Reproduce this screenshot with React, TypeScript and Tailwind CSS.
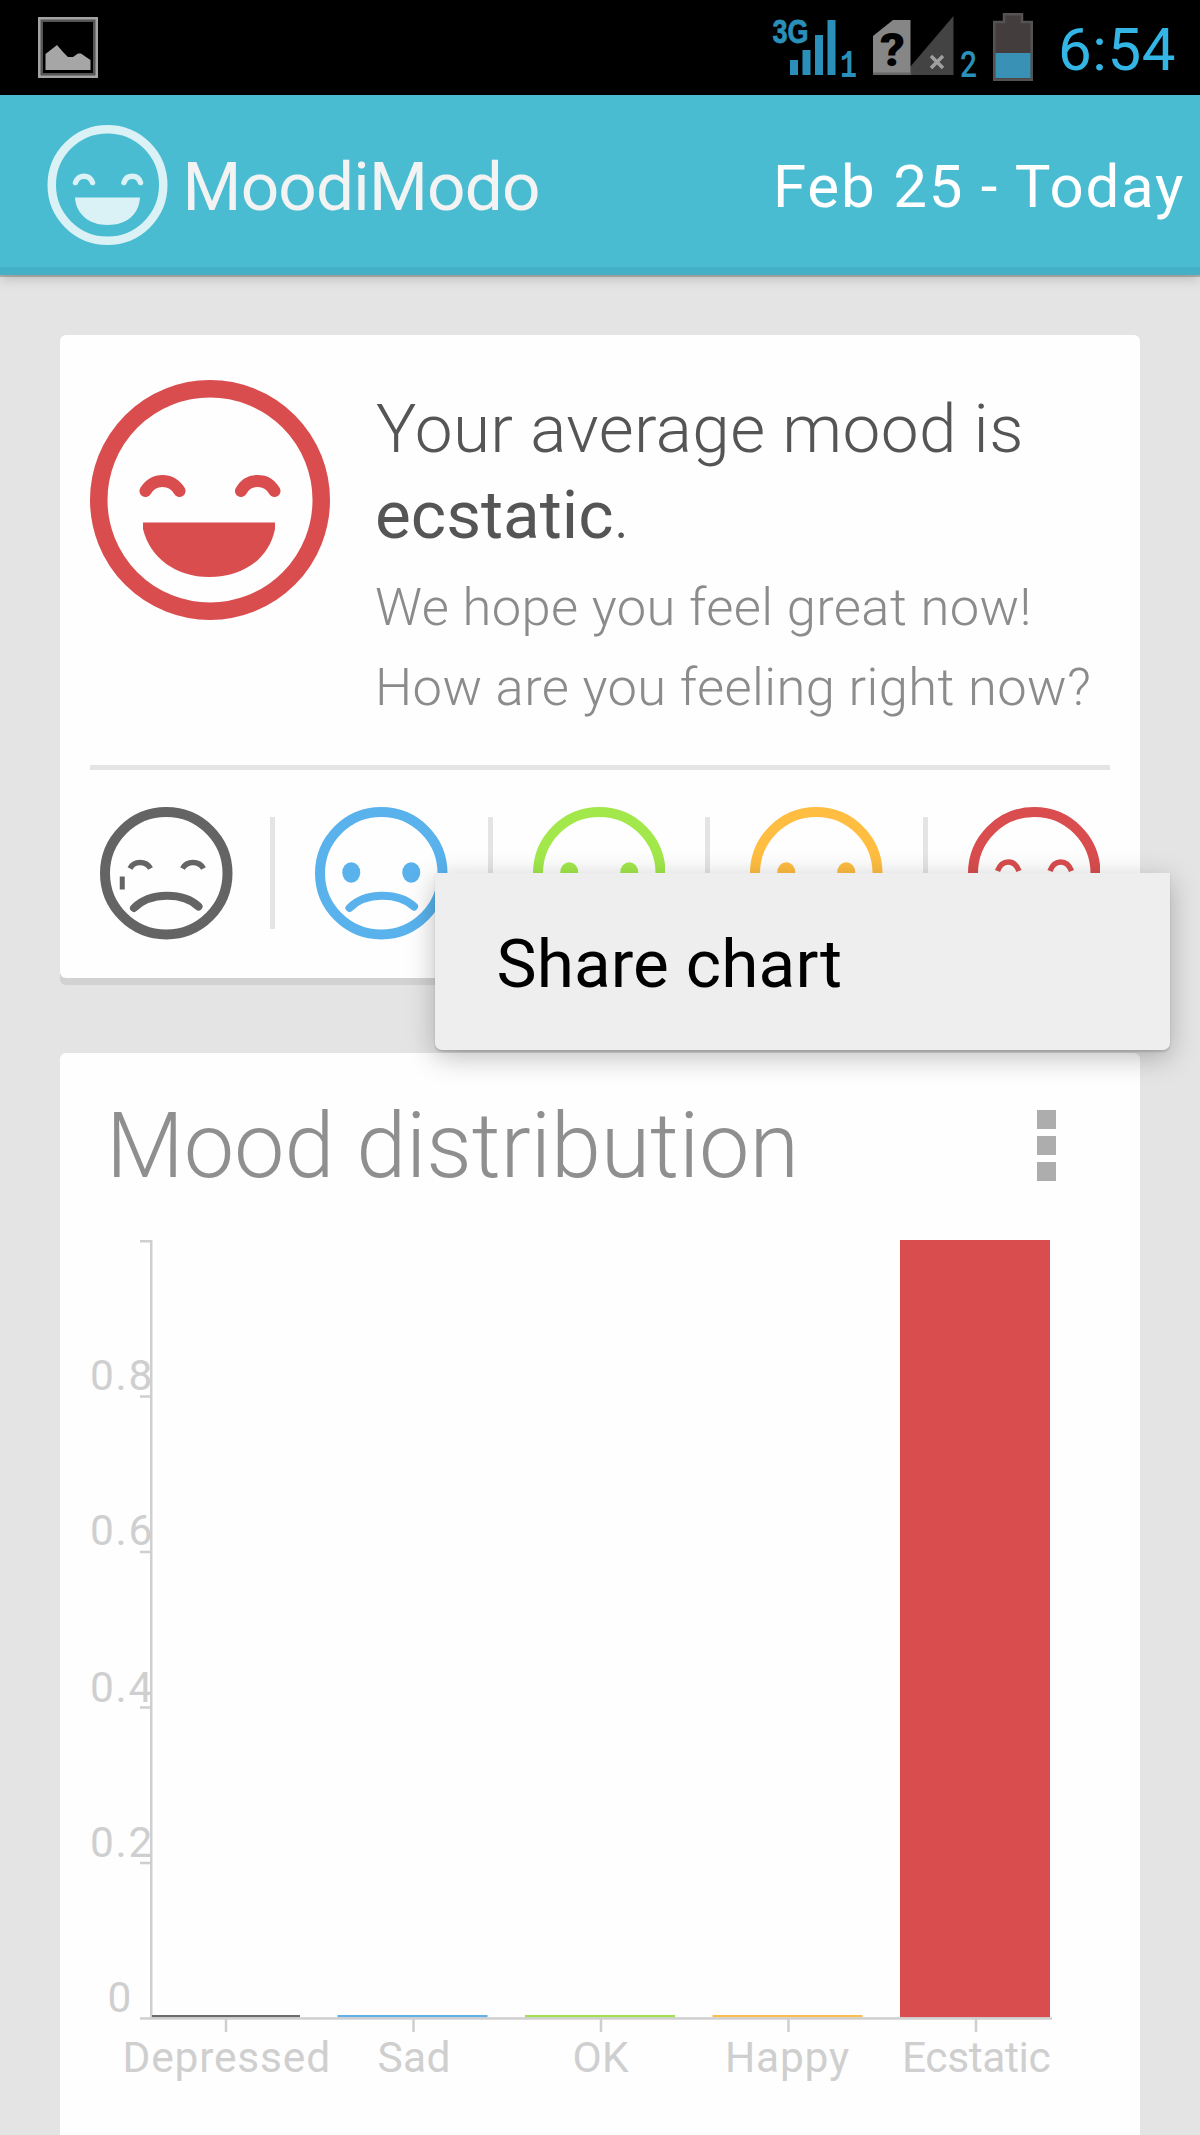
import type { ReactNode } from 'react';

function PictureIcon() {
  return (
    <svg width="60" height="61" viewBox="0 0 60 61">
      <rect x="3.5" y="3.5" width="53" height="54" fill="none" stroke="#555" strokeWidth="3" />
      <rect x="1.25" y="1.25" width="57.5" height="58.5" fill="none" stroke="#a3a3a3" strokeWidth="2.5" />
      <path d="M7.5 53V37L12 33.5L19 28L25 35L30 40H35L40 36.5H43L48 40L52.5 43V53Z" fill="#a6a6a6" />
    </svg>
  );
}

function SignalIcon() {
  return (
    <svg width="92" height="74" viewBox="-4 0 92 74" fill="#2a8fb9">
      <text x="0.500" y="29.500" fontFamily="Liberation Sans" fontWeight="700" fontSize="34" textLength="36" lengthAdjust="spacingAndGlyphs" stroke="#2a8fb9" strokeWidth="0.800">3G</text>
      <rect x="18" y="47" width="8" height="15" />
      <rect x="30.500" y="37" width="8" height="25" />
      <rect x="43" y="22" width="8" height="40" />
      <rect x="55.500" y="7" width="8" height="55" />
      <text x="68" y="64" fontFamily="Liberation Mono" fontWeight="700" fontSize="38" textLength="17" lengthAdjust="spacingAndGlyphs">1</text>
    </svg>
  );
}

function SimIcon() {
  return (
    <svg width="110" height="74" viewBox="0 0 110 74">
      <path d="M80.500 3V62H37V54Z" fill="#434343" />
      <path d="M0 23L20 7H37.500V62H0Z" fill="#868686" />
      <path d="M0 59.500H38V62H0Z" fill="#666" />
      <path d="M58 43L70 55M70 43L58 55" stroke="#a0a0a0" strokeWidth="3.500" />
      <text x="7" y="53" fontFamily="Roboto" fontWeight="900" fontSize="46" textLength="25" lengthAdjust="spacingAndGlyphs" fill="#000">?</text>
      <text x="87" y="64" fontFamily="Roboto" fontWeight="500" fontSize="37" textLength="17" lengthAdjust="spacingAndGlyphs" fill="#2a8fb9">2</text>
    </svg>
  );
}

function BatteryIcon() {
  return (
    <svg width="40" height="68" viewBox="0 0 40 68">
      <path d="M1.250 9H11V1.250H29V9H38.750V66.750H1.250Z" fill="#433d3d" stroke="#545252" strokeWidth="2.500" />
      <rect x="2.500" y="40" width="35" height="25" fill="#3992b5" />
    </svg>
  );
}

function LaughingFace() {
  return (
    <svg className="shrink-0" width="240" height="240" viewBox="0 0 240 240" fill="none" stroke="#d94d4f">
      <circle cx="120" cy="120" r="111.250" strokeWidth="17.500" />
      <path d="M55.500 111C63 97.500 82 97.500 89.500 111M151 111C158.500 97.500 177 97.500 184.500 111" strokeWidth="12" strokeLinecap="round" />
      <path d="M53 142.500H185V149C179 179 153 197 119 197C86 197 60 178 53 149Z" fill="#d94d4f" stroke="none" />
    </svg>
  );
}

function LogoFace() {
  return (
    <svg width="121" height="120" viewBox="0 0 121 120" fill="none" stroke="#daf1f5">
      <circle cx="60.500" cy="60" r="55.750" strokeWidth="8.500" />
      <path d="M28.500 57.500C31 49 43 49 45.500 57.500M77 57.500C79.500 49 91 49 93.500 57.500" strokeWidth="5.500" strokeLinecap="round" />
      <path d="M28 72.500H93C92 89 80 100 60.500 100C42 100 29 89 28 72.500Z" fill="#daf1f5" stroke="none" />
    </svg>
  );
}

function MoodFace({ color, children }: { color: string; children: ReactNode }) {
  return (
    <svg className="shrink-0" width="132.500" height="132.500" viewBox="0 0 132.500 132.500" fill="none" stroke={color}>
      <circle cx="66.250" cy="66.250" r="61.250" strokeWidth="10" />
      {children}
    </svg>
  );
}

function RoundEyes({ color }: { color: string }) {
  return (
    <g fill={color} stroke="none">
      <ellipse cx="36.250" cy="65.500" rx="9" ry="10.200" />
      <ellipse cx="96.250" cy="65.500" rx="9" ry="10.200" />
    </g>
  );
}

function Separator() {
  return <div className="mt-[10px] h-[112px] w-[5px] shrink-0 bg-[#e4e4e4]" />;
}

const yTicks = [
  { y: 1.25, label: null, baseline: 0 },
  { y: 156.500, label: '0.8', baseline: 149.500 },
  { y: 312, label: '0.6', baseline: 305 },
  { y: 467.500, label: '0.4', baseline: 462 },
  { y: 623, label: '0.2', baseline: 617 },
];

const bars = [
  { label: 'Depressed', x: 92, width: 148, color: '#6b6b6b', height: 2.5, textX: 62.500, spacing: 0.8 },
  { label: 'Sad', x: 277.5, width: 150, color: '#62b1e6', height: 2.5, textX: 317.500, spacing: 0.3 },
  { label: 'OK', x: 465, width: 150, color: '#a3e04f', height: 2.5, textX: 512.500, spacing: 0.3 },
  { label: 'Happy', x: 652.5, width: 150, color: '#fbbc50', height: 2.5, textX: 665, spacing: 0.75 },
  { label: 'Ecstatic', x: 840, width: 150, color: '#d94d4f', height: 777.5, textX: 842, spacing: -0.4 },
];

function MoodChart() {
  return (
    <svg className="block font-['Roboto']" width="1080" height="860" viewBox="0 0 1080 860" fontSize="42.500" fill="#cfcfcf">
      {yTicks.map((t) => (
        <g key={t.y}>
          <rect x="80" y={t.y - 1.25} width="12" height="2.500" />
          {t.label && <text x="30" y={t.baseline} letterSpacing="1.7">{t.label}</text>}
        </g>
      ))}
      <text x="47.500" y="772">0</text>
      <rect x="90" y="0" width="2.500" height="779" />
      {bars.map((b) => (
        <g key={b.label}>
          <rect x={b.x} y={777.5 - b.height} width={b.width} height={b.height} fill={b.color} />
          <text x={b.textX} y="832" letterSpacing={b.spacing}>{b.label}</text>
        </g>
      ))}
      <rect x="80" y="777.200" width="912" height="2.500" />
      {[166, 353.5, 541, 728.5, 916].map((x) => (
        <rect key={x} x={x - 1.25} y="779" width="2.500" height="13" />
      ))}
    </svg>
  );
}

export default function App() {
  return (
    <div className="relative flex h-[2135px] w-[1200px] flex-col overflow-hidden bg-[#e4e4e4] font-['Roboto',sans-serif] whitespace-nowrap">
      <div className="flex h-[95px] shrink-0 items-start bg-black pt-[13px] pr-[25px] pl-[37.5px]">
        <div className="mt-1 flex-1"><PictureIcon /></div>
        <SignalIcon />
        <div className="ml-[13px]"><SimIcon /></div>
        <div className="ml-[10px]"><BatteryIcon /></div>
        <div className="ml-[25.5px] w-[117px] pt-[1px] text-[60px] leading-[71px] tracking-[0.6px] text-[#33b5e5]">6:54</div>
      </div>

      <header className="z-10 flex h-[180px] shrink-0 items-center border-b-[8px] border-[#43b0c6] bg-[#49bcd2] pt-[8px] pl-[47px] shadow-[0_2px_0_rgba(0,0,0,0.2),0_3px_12px_rgba(0,0,0,0.2)]">
        <LogoFace />
        <h1 className="ml-[14.500px] flex-1 pt-[4px] text-[67.5px] leading-[80px] tracking-[-0.8px] text-[#f3f3f3]">MoodiModo</h1>
        <div className="w-[427px] pt-[4px] text-[60px] leading-[80px] tracking-[1.8px] text-white">Feb 25 - Today</div>
      </header>

      <section className="mx-[60px] mt-[60px] h-[643px] shrink-0 rounded-[6px] bg-[#fefefe] px-[30px] shadow-[0_7px_0_#d2d2d2]">
        <div className="flex h-[435px] border-b-[5px] border-[#e4e4e4] pt-[45px]">
          <LaughingFace />
          <div className="pt-[6px] pl-[46px]">
            <p className="text-[67.5px] leading-[86px] font-light tracking-[0.37px] text-[#555]">
              Your average mood is
              <br />
              <span className="-ml-px font-normal tracking-normal">ecstatic</span>.
            </p>
            <p className="mt-[9px] -ml-px text-[52.5px] leading-[80px] font-light tracking-[0.4px] text-[#8b8b8b]">
              We hope you feel great now!
              <br />
              How are you feeling right now?
            </p>
          </div>
        </div>
        <div className="flex gap-[40px] pt-[37px] pl-[10px]">
          <div className="-mr-[2.5px]">
            <MoodFace color="#646464">
              <path d="M30 61.500C34 53.500 46 53.500 50.500 61.500M82.500 61.500C87 53.500 99 53.500 103.500 61.500" strokeWidth="5.500" />
              <path d="M22.250 69.500V82.500" strokeWidth="5" />
              <path d="M34 101C50 85 83 85 98.500 99.500" strokeWidth="8" strokeLinecap="round" />
            </MoodFace>
          </div>
          <Separator />
          <MoodFace color="#59b2ec">
            <RoundEyes color="#59b2ec" />
            <path d="M34.500 101C50 85 83 85 99 99.500" strokeWidth="8" strokeLinecap="round" />
          </MoodFace>
          <Separator />
          <MoodFace color="#a2e84b">
            <RoundEyes color="#a2e84b" />
            <path d="M38 95H95" strokeWidth="8" strokeLinecap="round" />
          </MoodFace>
          <Separator />
          <MoodFace color="#ffbd41">
            <RoundEyes color="#ffbd41" />
            <path d="M34 90C50 106 83 106 99 90" strokeWidth="8" strokeLinecap="round" />
          </MoodFace>
          <Separator />
          <MoodFace color="#d94d4f">
            <path d="M29.500 64C34 52 46.500 52 51 64M82 64C86.500 52 99 52 103.500 64" strokeWidth="5.500" />
            <path d="M30 79H102C99 98 85 109 66 109C47 109 33 98 30 79Z" fill="#d94d4f" stroke="none" />
          </MoodFace>
        </div>
      </section>

      <section className="mx-[60px] mt-[74.500px] h-[1200px] shrink-0 rounded-t-[6px] bg-[#fefefe]">
        <div className="flex h-[187.500px] items-start justify-between pt-[44px] pr-[84px] pl-[46px]">
          <h2 className="text-[90px] leading-[100px] font-light tracking-[-0.1px] text-[#8f8f8f]">Mood distribution</h2>
          <div className="mt-[13px] flex flex-col gap-[7px]">
            <span className="h-[19px] w-[19px] bg-[#adadad]" />
            <span className="h-[19px] w-[19px] bg-[#adadad]" />
            <span className="h-[19px] w-[19px] bg-[#adadad]" />
          </div>
        </div>
        <MoodChart />
      </section>

      <div className="absolute top-[872.5px] left-[435px] z-20 flex h-[177.5px] w-[735px] items-center rounded-b-[7px] bg-[#eee] pt-[6px] pl-[61.500px] text-[67.5px] leading-[80px] tracking-[0.1px] text-black shadow-[0_2px_2px_rgba(0,0,0,0.14),0_7px_28px_rgba(0,0,0,0.26)]">
        Share chart
      </div>
    </div>
  );
}
